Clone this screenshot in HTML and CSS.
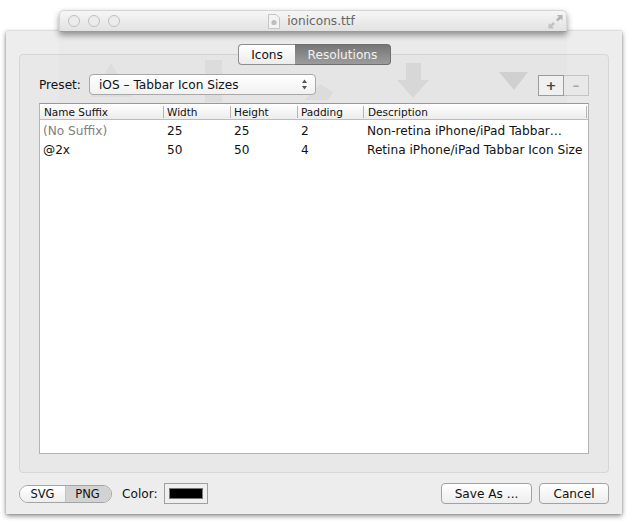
FILE: index.html
```html
<!DOCTYPE html>
<html lang="en">
  <head>
    <meta charset="UTF-8" />
    <title>ionicons.ttf</title>
    <link rel="stylesheet" href="styles.css">
  </head>
  <body>
    <!-- Dialog sheet, slightly see-through over the parent window -->
    <div class="sheet">
      <div class="panel">
        <div class="tabs">
          <button class="tab tab-off">Icons</button>
          <button class="tab tab-on">Resolutions</button>
        </div>

        <div class="preset-row">
          <span class="preset-label">Preset:</span>
          <div class="select">
            <span>iOS – Tabbar Icon Sizes</span>
            <svg class="select-arrows" width="7" height="11" viewBox="0 0 7 11">
              <path d="M3.5 0.5 L6 4 H1 Z M3.5 10.5 L6 7 H1 Z" fill="#555" />
            </svg>
          </div>
          <div class="plus-minus">
            <span class="pm pm-on">+</span>
            <span class="pm pm-off">–</span>
          </div>
        </div>

        <div class="table">
          <div class="row head">
            <span class="col c1">Name Suffix</span>
            <span class="col c2">Width</span>
            <span class="col c3">Height</span>
            <span class="col c4">Padding</span>
            <span class="col c5">Description</span>
          </div>
          <div class="row body-row first">
            <span class="col c1 muted">(No Suffix)</span>
            <span class="col c2">25</span>
            <span class="col c3">25</span>
            <span class="col c4">2</span>
            <span class="col c5">Non-retina iPhone/iPad Tabbar…</span>
          </div>
          <div class="row body-row">
            <span class="col c1">@2x</span>
            <span class="col c2">50</span>
            <span class="col c3">50</span>
            <span class="col c4">4</span>
            <span class="col c5">Retina iPhone/iPad Tabbar Icon Size</span>
          </div>
        </div>
      </div>

      <div class="footer">
        <div class="format">
          <span class="fmt fmt-off">SVG</span>
          <span class="fmt fmt-on">PNG</span>
        </div>
        <span class="color-label">Color:</span>
        <div class="swatch"><div class="swatch-fill"></div></div>
        <button class="btn btn-save">Save As ...</button>
        <button class="btn btn-cancel">Cancel</button>
      </div>
    </div>

    <!-- Parent window showing through the sheet -->
    <svg class="ghost" width="628" height="110" viewBox="0 0 628 110">
      <rect x="59" y="32" width="508" height="78" fill="#000" opacity="0.012" />
      <path d="M90 97 L111 63 L132 97 Z" fill="#000" opacity="0.03" />
      <rect x="205" y="60" width="17" height="42" fill="#000" opacity="0.04" />
      <path d="M305 100 L320 84 L333 92 L328 100 Z" fill="#000" opacity="0.04" />
      <path d="M406 63 H421 V80 H429 L413 98 L397 80 H406 Z" fill="#000" opacity="0.06" />
      <path d="M499 72 H528 L514 90 Z" fill="#000" opacity="0.09" />
    </svg>

    <!-- Title bar of the parent window -->
    <div class="titlebar">
      <div class="lights">
        <span class="light"></span>
        <span class="light"></span>
        <span class="light"></span>
      </div>
      <div class="title">
        <svg class="doc-icon" width="12" height="15" viewBox="0 0 12 15">
          <path d="M0.5 0.5 H8 L11.5 4 V14.5 H0.5 Z" fill="#f3f3f3" stroke="#c4c4c4" />
          <circle cx="6" cy="8.5" r="2.6" fill="#bdbdbd" />
        </svg>
        <span>ionicons.ttf</span>
      </div>
      <svg class="resize-icon" width="15" height="15" viewBox="0 0 16 16">
        <path d="M9.5 1 H15.5 V7 L13.5 5 L10.5 8 L8.5 6 L11.5 3 Z" fill="#b4b4b4" />
        <path d="M0.5 15.5 V9.5 L2.5 11.5 L5.5 8.5 L7.5 10.5 L4.5 13.5 L6.5 15.5 Z" fill="#c2c2c2" />
      </svg>
    </div>
  </body>
</html>
```

FILE: styles.css
```css
body {
  margin: 0;
  width: 628px;
  height: 525px;
  overflow: hidden;
  background-color: #fff;
  font-family: "DejaVu Sans", sans-serif;
  font-size: 12.15px;
  color: #111;
  position: relative;
}

/* Sheet */
.sheet {
  width: 616px;
  height: 483px;
  margin-left: 6px;
  position: relative;
  top: 31px;
  box-sizing: border-box;
  padding: 23px 13px 0 13px;
  background-color: #ededed;
  box-shadow: 0 2px 5px rgba(0, 0, 0, 0.45), 0 0 2px rgba(0, 0, 0, 0.2);
}
.panel {
  height: 419px;
  box-sizing: border-box;
  padding: 19px 19px 18px 19px;
  background-color: #e8e8e8;
  border: 1px solid #d6d6d6;
  border-radius: 4px;
  position: relative;
}

/* Segmented tabs, straddling the panel's top edge */
.tabs {
  position: absolute;
  z-index: 1;
  top: -11px;
  left: 218px;
  display: flex;
}
.tab {
  height: 21px;
  padding: 0;
  font: inherit;
  border: 1px solid #8e8e8e;
}
.tab-off {
  width: 57px;
  color: #111;
  background: linear-gradient(#fff, #ececec);
  border-right: none;
  border-radius: 4px 0 0 4px;
}
.tab-on {
  width: 96px;
  color: #f2f2f2;
  background: linear-gradient(#767676, #9c9c9c);
  border-color: #6e6e6e;
  border-left: none;
  border-radius: 0 4px 4px 0;
}

/* Preset row */
.preset-row {
  display: flex;
  align-items: flex-start;
  height: 29px;
  position: relative;
  z-index: 1;
}
.preset-label {
  width: 50px;
  padding-top: 4px;
}
.select {
  width: 227px;
  height: 21px;
  box-sizing: border-box;
  padding: 0 7px 0 9px;
  display: flex;
  align-items: center;
  justify-content: space-between;
  background: linear-gradient(#fff, #f1f1f1);
  border: 1px solid #a8a8a8;
  border-radius: 4px;
}
.plus-minus {
  margin-left: auto;
  margin-top: 1px;
  display: flex;
  height: 21px;
}
.pm {
  width: 25px;
  display: flex;
  align-items: center;
  justify-content: center;
  font-size: 13px;
  font-weight: bold;
  border: 1px solid #b0b0b0;
  box-sizing: border-box;
}
.pm-on {
  width: 26px;
  color: #444;
  background-color: #f0f0f0;
  border-color: #9c9c9c;
}
.pm-off {
  color: #a6a6a6;
  background-color: #e8e8e8;
  border-left: none;
  border-color: #c4c4c4;
}

/* Table */
.table {
  height: 351px;
  box-sizing: border-box;
  position: relative;
  z-index: 1;
  background-color: #fff;
  border: 1px solid #b4b4b4;
  border-top-color: #999;
}
.row {
  display: flex;
}
.head {
  height: 15px;
  align-items: center;
  font-size: 10.5px;
  background: linear-gradient(#fff, #ececec);
  border-bottom: 1px solid #bdbdbd;
}
.head .col {
  height: 12px;
  line-height: 12px;
  border-left: 1px solid #b5b5b5;
  padding-left: 3px;
}
.head .c1 {
  border-left: none;
  padding-left: 4px;
}
.head .c5 {
  padding-left: 4px;
  margin-right: 1px;
  border-right: 1px solid #b5b5b5;
}
.col {
  display: block;
  box-sizing: border-box;
  white-space: nowrap;
}
.c1 { width: 123px; padding-left: 3px; }
.c2 { width: 67px; padding-left: 4px; }
.c3 { width: 67px; padding-left: 4px; }
.c4 { width: 66px; padding-left: 4px; }
.c5 { flex: 1; padding-left: 4px; }
.body-row {
  height: 19px;
  line-height: 19px;
}
.first {
  margin-top: 2px;
}
.muted {
  color: #808080;
}

/* Footer */
.footer {
  display: flex;
  align-items: center;
  height: 21px;
  margin-top: 10px;
}
.format {
  display: flex;
  width: 93px;
  height: 18px;
  box-sizing: border-box;
  border: 1px solid #a4a4a4;
  border-radius: 9px;
  overflow: hidden;
  font-size: 11.5px;
}
.fmt {
  display: flex;
  align-items: center;
  justify-content: center;
}
.fmt-off {
  width: 45px;
  background: linear-gradient(#fff, #eee);
  border-right: 1px solid #c4c4c4;
}
.fmt-on {
  flex: 1;
  padding-right: 2px;
  background-color: #d2d2d2;
}
.color-label {
  margin-left: 10px;
  width: 42px;
}
.swatch {
  width: 44px;
  height: 21px;
  box-sizing: border-box;
  padding: 4px;
  background-color: #efefef;
  border: 1px solid #a0a0a0;
}
.swatch-fill {
  height: 100%;
  box-sizing: border-box;
  background-color: #000;
  border: 1px solid #777;
}
.btn {
  height: 21px;
  padding: 0;
  font: inherit;
  color: #111;
  background: linear-gradient(#fff, #ededed);
  border: 1px solid #a2a2a2;
  border-radius: 4px;
}
.btn-save {
  width: 91px;
  margin-left: auto;
}
.btn-cancel {
  width: 70px;
  margin-left: 7px;
}

/* Parent window bits */
.ghost {
  position: absolute;
  z-index: 0;
  top: 0;
  left: 0;
  pointer-events: none;
}
.titlebar {
  position: absolute;
  z-index: 2;
  top: 10px;
  left: 59px;
  width: 508px;
  height: 22px;
  box-sizing: border-box;
  background: linear-gradient(#f6f6f6, #e2e2e2);
  border: 1px solid #d4d4d4;
  border-bottom: 1px solid #9a9a9a;
  border-radius: 5px 5px 0 0;
  box-shadow: 0 3px 6px rgba(0, 0, 0, 0.4);
  display: flex;
  align-items: center;
  justify-content: center;
  color: #666;
}
.lights {
  position: absolute;
  left: 8px;
  top: 4px;
  display: flex;
  gap: 8px;
}
.light {
  width: 12px;
  height: 12px;
  box-sizing: border-box;
  border: 1.5px solid #c0c0c0;
  border-radius: 50%;
  background-color: #ececec;
}
.title {
  display: flex;
  align-items: center;
  gap: 7px;
  padding-right: 3px;
}
.resize-icon {
  position: absolute;
  right: 3px;
  top: 3px;
}
```
